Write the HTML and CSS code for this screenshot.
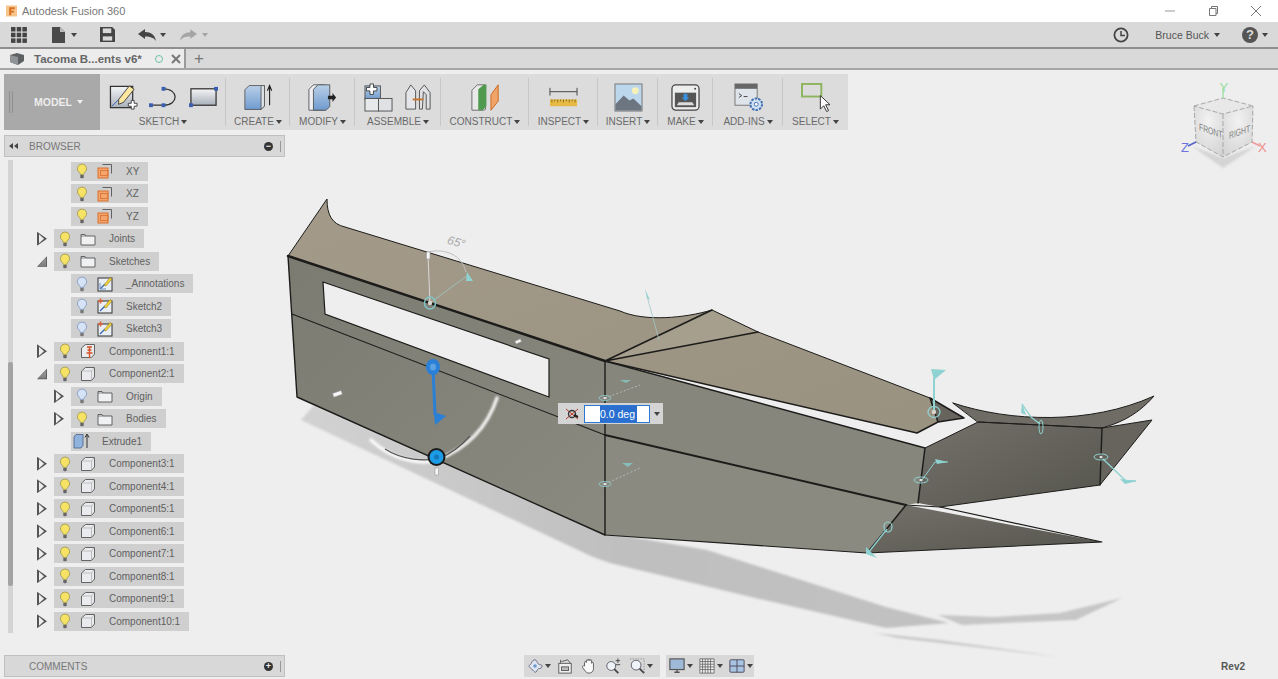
FILE: index.html
```html
<!DOCTYPE html>
<html lang="en">
<head>
<meta charset="utf-8">
<title>Autodesk Fusion 360</title>
<link rel="stylesheet" href="styles.css">
</head>
<body>
<svg class="defs" width="0" height="0" aria-hidden="true">
  <defs>
    <linearGradient id="blueFace" x1="0" y1="0" x2="0" y2="1"><stop offset="0" stop-color="#b9cfe8"/><stop offset="1" stop-color="#6f9bcf"/></linearGradient>
    <linearGradient id="greyFace" x1="0" y1="0" x2="0" y2="1"><stop offset="0" stop-color="#f4f5f7"/><stop offset="1" stop-color="#a9b0ba"/></linearGradient>
    <linearGradient id="topFace" x1="0" y1="0" x2="1" y2="1"><stop offset="0" stop-color="#a39a89"/><stop offset="1" stop-color="#9a9281"/></linearGradient>
    <linearGradient id="frontFace" x1="0" y1="0" x2="1" y2="1"><stop offset="0" stop-color="#7b7b72"/><stop offset="1" stop-color="#8b8a80"/></linearGradient>
    <linearGradient id="darkFace" x1="0" y1="0" x2="1" y2="1"><stop offset="0" stop-color="#73716a"/><stop offset="1" stop-color="#55544d"/></linearGradient>
    <linearGradient id="shadowFade" x1="0" y1="0" x2="1" y2="0"><stop offset="0" stop-color="#d2d2d2"/><stop offset=".5" stop-color="#bfbfbf"/><stop offset="1" stop-color="#c2c2c2"/></linearGradient>
    <radialGradient id="cubeFace" cx=".5" cy=".3" r=".9"><stop offset="0" stop-color="#f2f2f2"/><stop offset="1" stop-color="#cfcfcf"/></radialGradient>

    <symbol id="bulb-on" viewBox="0 0 12 16"><path d="M6 1a4.600 4.600 0 0 0-2.600 8.400c.6.500.8 1.200.8 2h3.600c0-.8.2-1.500.8-2A4.600 4.600 0 0 0 6 1z" fill="#f6e264" stroke="#9d9550" stroke-width=".8"/><path d="M4.300 12h3.400v2.200l-1 1h-1.400l-1-1z" fill="#666"/></symbol>
    <symbol id="bulb-off" viewBox="0 0 12 16"><path d="M6 1a4.600 4.600 0 0 0-2.600 8.400c.6.500.8 1.200.8 2h3.600c0-.8.2-1.500.8-2A4.600 4.600 0 0 0 6 1z" fill="#d6e3f6" stroke="#7b93bd" stroke-width=".8"/><path d="M4.300 12h3.400v2.200l-1 1h-1.400l-1-1z" fill="#777"/></symbol>
    <symbol id="folder" viewBox="0 0 16 14"><path d="M1 2.500h4l1 1.500h9v9H1z" fill="#f0f1f3" stroke="#555" stroke-width=".9"/><path d="M1 4h5" stroke="#555" stroke-width=".7" fill="none"/></symbol>
    <symbol id="plane" viewBox="0 0 16 16"><path d="M5.500 1.500h9v9" fill="none" stroke="#555" stroke-width=".9"/><rect x="1" y="5" width="10" height="10" fill="#f4a56e" stroke="#d9702f"/><rect x="3.500" y="7.500" width="7.500" height="5" fill="none" stroke="#d9702f" stroke-width=".8"/></symbol>
    <symbol id="comp" viewBox="0 0 16 16"><path d="M1.500 5 5.500 1.500h9v9.500l-3 3.500h-10z" fill="#e9ebee" stroke="#555" stroke-width=".9" stroke-linejoin="round"/><path d="M1.500 5h10v9.500M11.500 5l3-3.500" fill="none" stroke="#aaa" stroke-width=".7"/></symbol>
    <symbol id="comp-pin" viewBox="0 0 16 16"><path d="M1.500 5 5.500 1.500h9v9.500l-3 3.500h-10z" fill="#e9ebee" stroke="#555" stroke-width=".9" stroke-linejoin="round"/><path d="M7 4h5M7.500 7h4M6.500 10h6M9.500 4v11" stroke="#d8532a" stroke-width="1.400" fill="none"/></symbol>
    <symbol id="sketch" viewBox="0 0 16 16"><rect x="1" y="2" width="14" height="13" fill="#e9edf4" stroke="#333"/><path d="M3 13 8 8" stroke="#3566b0" stroke-width="1.300"/><path d="M3 13h6M3 13V7" stroke="#6b8fc5" stroke-width="1"/><path d="M7 9l6-7.500 2 1.500-6 7z" fill="#f4d43c" stroke="#7d6a10" stroke-width=".5"/></symbol>
    <symbol id="sketch-warn" viewBox="0 0 16 16"><rect x="1" y="3" width="14" height="12" fill="#e9edf4" stroke="#333"/><path d="M3 13 8 8" stroke="#3566b0" stroke-width="1.300"/><path d="M7 9l6-7.500 2 1.500-6 7z" fill="#f4d43c" stroke="#7d6a10" stroke-width=".5"/><path d="M1 3h5M3.500 .5v5" stroke="#d8633a" stroke-width="1.600"/></symbol>
    <symbol id="extrude" viewBox="0 0 18 16"><path d="M1 4 3 1.500h7v11L8 15H1z" fill="#8fb3dd" stroke="#44618a" stroke-width=".8"/><path d="M14 15V2M12 4.500 14 1l2 3.500" fill="none" stroke="#333" stroke-width="1"/></symbol>
  </defs>
</svg>

<div class="app">
  <header class="titlebar">
    <svg class="ticon" viewBox="0 0 12 12"><rect width="12" height="12" fill="#f6c58d"/><path d="M3.500 2h6v2H5.700v1.700h3v2h-3V10.500H3.500z" fill="#d9701f"/></svg>
    <span class="title">Autodesk Fusion 360</span>
    <div class="winctl">
      <svg class="wc" viewBox="0 0 12 12"><path d="M1 6h10" stroke="#999"/></svg>
      <svg class="wc" viewBox="0 0 12 12"><path d="M2.500 3.500h6.500v7H2.500zM4.500 3.500v-2h6v7H9" fill="none" stroke="#777"/></svg>
      <svg class="wc" viewBox="0 0 12 12"><path d="M1 1l10 10M11 1 1 11" stroke="#777"/></svg>
    </div>
  </header>

  <div class="qat">
    <svg class="q-grid" viewBox="0 0 16 16" fill="#444"><rect width="4.500" height="4.500"/><rect x="5.700" width="4.500" height="4.500"/><rect x="11.400" width="4.500" height="4.500"/><rect y="5.700" width="4.500" height="4.500"/><rect x="5.700" y="5.700" width="4.500" height="4.500"/><rect x="11.400" y="5.700" width="4.500" height="4.500"/><rect y="11.400" width="4.500" height="4.500"/><rect x="5.700" y="11.400" width="4.500" height="4.500"/><rect x="11.400" y="11.400" width="4.500" height="4.500"/></svg>
    <svg class="q-file" viewBox="0 0 14 16"><path d="M0 0h8l5 5v11H0z" fill="#4a4a4a"/><path d="M8 0v5h5" fill="#bbb"/></svg>
    <span class="caret q-c1"></span>
    <svg class="q-save" viewBox="0 0 16 16"><path d="M0 0h13l3 3v13H0z" fill="#444"/><rect x="3" y="1.500" width="9" height="5" fill="#d9d9d9"/><rect x="3" y="10" width="10" height="4.500" fill="#d9d9d9"/></svg>
    <svg class="q-undo" viewBox="0 0 18 12"><path d="M0 5 7 0v3c6 0 10 3 11 9-2-3-5-4.500-11-4.500V10z" fill="#444"/></svg>
    <span class="caret q-c2"></span>
    <svg class="q-redo" viewBox="0 0 18 12"><path d="M18 5 11 0v3C5 3 1 6 0 12c2-3 5-4.500 11-4.500V10z" fill="#a5a5a5"/></svg>
    <span class="caret faint q-c3"></span>
    <svg class="q-clock" viewBox="0 0 16 16"><circle cx="8" cy="8" r="6.600" fill="none" stroke="#444" stroke-width="1.800"/><path d="M8 4v4.500h4" fill="none" stroke="#444" stroke-width="1.500"/></svg>
    <span class="user">Bruce Buck</span>
    <span class="caret q-c4"></span>
    <span class="help">?</span>
    <span class="caret q-c5"></span>
  </div>

  <div class="tabs">
    <div class="tab">
      <svg class="tab-box" viewBox="0 0 16 14"><path d="M1 3 8 1l7 2v6l-6 4-8-3z" fill="#5e6164"/><path d="M1 3l8 2v8l-8-3z" fill="#8f9296"/></svg>
      <span class="tab-name">Tacoma B...ents v6*</span>
      <svg class="tab-dot" viewBox="0 0 10 10"><circle cx="5" cy="5" r="3.500" fill="none" stroke="#6fc1a8"/></svg>
      <svg class="tab-x" viewBox="0 0 10 10"><path d="M1 1l8 8M9 1 1 9" stroke="#777" stroke-width="2"/></svg>
    </div>
    <span class="tab-plus">+</span>
  </div>

  <main class="workspace">
    <svg class="canvas" viewBox="0 70 1278 609" aria-label="3D model">
      <!-- shadows -->
      <g class="soft">
        <path d="M301 420 593 557 610 563 751 597 886 628 949 623 886 607 707 550 637 538 604 533 314 405z" fill="url(#shadowFade)"/>
        <path d="M875 633 897 638 1060 657 940 640z" fill="#c9c9c9"/>
        <path d="M938 615 962 625 1076 620 1122 598 1060 613 995 617z" fill="#c6c6c6"/>
      </g>
      <!-- top faces -->
      <path d="M288 256 327 199C327 215 332 224 345 227L620 311C645 322 685 318 712 310L758 332 930 398 938 422 917 433 605 361z" fill="url(#topFace)"/>
      <path d="M605 361 712 310 758 332z" fill="#a79f8e"/>
      <path d="M930 398 964 418 938 422z" fill="#66645c"/>
      <!-- left body -->
      <path d="M288 256 605 361V535L297 397z" fill="url(#frontFace)"/>
      <path d="M323 282 549 359V397L325 314z" fill="#eeeeee" stroke="#1d1d1b" stroke-width="1.200"/>
      <!-- right body -->
      <path d="M953 403C1010 422 1090 425 1154 396 1135 418 1115 424 1102 428L978 422z" fill="#6e6c64"/>
      <path d="M1102 428 1152 420 1100 485z" fill="#66645d"/>
      <path d="M925 448 978 422 1102 428 1100 485 940 507 918 503z" fill="url(#darkFace)"/>
      <path d="M605 361 925 448 918 503 906 505 605 435z" fill="#87867c"/>
      <path d="M605 435 906 505 867 553 605 535z" fill="#8b8a80"/>
      <path d="M906 505 1102 542 867 553z" fill="url(#darkFace)"/>
      <!-- edges -->
      <g fill="none" stroke="#1c1c1a" stroke-linecap="round" stroke-linejoin="round">
        <path d="M288 256 605 361" stroke-width="2.400"/>
        <path d="M288 256 327 199C327 215 332 224 345 227L620 311C645 322 685 318 712 310L758 332 930 398" stroke-width="1"/>
        <path d="M288 256 297 397 605 535V361" stroke-width="1.400"/>
        <path d="M605 361 712 310M605 361 758 332" stroke-width="1.600"/>
        <path d="M605 361 917 433 938 422 964 418 930 398 938 422" stroke-width="1.500"/>
        <path d="M605 361 925 448 918 503" stroke-width="1.500"/>
        <path d="M292 314 605 435" stroke-width="1.100"/>
        <path d="M605 435 906 505" stroke-width="1.800"/>
        <path d="M906 505 940 507 1102 542 867 553 605 535" stroke-width="1.100"/>
        <path d="M906 505 867 553" stroke-width="1.500"/>
        <path d="M925 448 978 422 1102 428 1152 420 1100 485 940 507" stroke-width="1"/>
        <path d="M953 403C1010 422 1090 425 1154 396 1135 418 1115 424 1102 428L978 422z" stroke-width="1"/>
        <path d="M1102 428 1100 485" stroke-width="1.400"/>
      </g>
      <!-- teal manipulators -->
      <g fill="#8fd2d2" stroke="#8fd2d2">
        <path d="M430 303 428 255" fill="none" stroke="#d8d8d8"/>
        <path d="M430 303 468 275" fill="none" stroke="#9fc9c3" stroke-width=".8"/>
        <path d="M428 252C445 248 462 255 466 272" fill="none" stroke="#bfbfbf"/>
        <path d="M467 272 473 281 466 281z" stroke="none"/>
        <ellipse cx="430" cy="303" rx="5.500" ry="6" fill="none" stroke="#7fc5c5" stroke-width="1.500"/>
        <circle cx="430" cy="303" r="2.200" fill="#dcd6d0" stroke="none"/>
        <path d="M645 289 650 300 647 298z" stroke="none"/>
        <path d="M647 296 659 340" fill="none" stroke="#9fc9c3" stroke-width=".8"/>
        <ellipse cx="605" cy="398" rx="6" ry="2.500" fill="none" stroke-width=".8"/>
        <ellipse cx="605" cy="484" rx="6" ry="2.500" fill="none" stroke-width=".8"/>
        <circle cx="605" cy="398" r="1.500" fill="#e2e8e4" stroke="none"/>
        <circle cx="605" cy="484" r="1.500" fill="#e2e8e4" stroke="none"/>
        <path d="M605 398 640 385M605 484 640 468" fill="none" stroke="#b8c9c4" stroke-dasharray="2 2" stroke-width=".8"/>
        <path d="M620 380h11l-5 3zM622 463h11l-5 4z" stroke="none" fill="#88bcb9"/>
        <path d="M934 410V378" fill="none" stroke-width="2"/>
        <path d="M931 369 946 370 934 380z" stroke="none"/>
        <ellipse cx="934" cy="412" rx="6" ry="5.500" fill="none" stroke-width="1.300"/>
        <circle cx="934" cy="412" r="2.200" fill="#d9d6d0" stroke="none"/>
        <path d="M1022 404 1031 417 1040 424" fill="none" stroke-width="1.300"/>
        <path d="M1022 403 1026 415 1021 413z" stroke="none"/>
        <ellipse cx="1041" cy="427" rx="2" ry="7" fill="none" stroke-width="1"/>
        <ellipse cx="921" cy="480" rx="7" ry="3" fill="none" stroke-width="1"/>
        <circle cx="921" cy="480" r="1.500" fill="#dfe5e0" stroke="none"/>
        <path d="M922 480 935 462 948 462" fill="none" stroke-width="1"/>
        <path d="M935 459 948 462 937 464z" stroke="none"/>
        <ellipse cx="1101" cy="457" rx="7" ry="3" fill="none" stroke-width="1"/>
        <circle cx="1101" cy="457" r="1.500" fill="#dfe5e0" stroke="none"/>
        <path d="M1103 459 1126 481 1136 481" fill="none" stroke-width="1.300"/>
        <path d="M1120 479 1137 481 1125 484z" stroke="none"/>
        <ellipse cx="888" cy="527" rx="4" ry="5" fill="none" stroke-width="1.200"/>
        <path d="M887 529 868 553" fill="none" stroke-width="1.300"/>
        <path d="M866 547 877 558 866 554z" stroke="none"/>
      </g>
      <!-- white handles -->
      <g fill="#f7f7f7" stroke="#999" stroke-width=".6">
        <rect x="426.500" y="252" width="3.500" height="7"/>
        <rect x="515" y="340" width="6" height="3" transform="rotate(-25 518 341)"/>
        <rect x="333" y="392" width="9" height="4" transform="rotate(-20 337 394)"/>
        <rect x="435" y="468" width="3.500" height="7"/>
      </g>
      <!-- blue manipulators -->
      <path class="glow" d="M371 440C392 460 420 465 437 460 468 448 487 428 497 398" fill="none" stroke="#fff" stroke-width="3.500" stroke-linecap="round"/>
      <path d="M385 449C402 460 425 462 440 458 450 454 460 447 470 436" fill="none" stroke="#555" stroke-width="1.200"/>
      <path d="M433 368 435 415" stroke="#2a7fd6" stroke-width="3" fill="none"/>
      <path d="M434 412 446 416 435 425z" fill="#2a7fd6"/>
      <ellipse cx="433" cy="367" rx="7" ry="8" fill="#2a7fd6"/>
      <ellipse cx="433" cy="367" rx="3" ry="3.500" fill="#5da3e3"/>
      <circle cx="436.500" cy="457" r="9" fill="#1a1a1a"/>
      <circle cx="436.500" cy="457" r="7" fill="#1b9be6"/>
      <circle cx="436.500" cy="457" r="2.500" fill="#1577b8"/>
      <text class="angle" x="447" y="246" transform="rotate(16 456 243)">65°</text>
      <!-- view cube -->
      <path class="soft" d="M1223 158 1192 146 1223 168 1256 146z" fill="#d4d4d4"/>
      <path d="M1194 106 1223 98 1253 106 1223 114z" fill="#e8e8e8"/>
      <path d="M1194 106 1223 114V157L1196 142z" fill="url(#cubeFace)"/>
      <path d="M1253 106 1223 114V157L1252 142z" fill="url(#cubeFace)"/>
      <path d="M1194 106 1223 98 1253 106 1223 114zM1194 106 1196 142 1223 157 1252 142 1253 106M1223 114V157" fill="none" stroke="#a8a8a8" stroke-width="1" stroke-dasharray="5 2"/>
      <path d="M1223 98V88" stroke="#a6e0ac" stroke-width="1.500"/>
      <path d="M1196 142 1188 146" stroke="#5560c8" stroke-width="1.500"/>
      <path d="M1252 142 1260 146" stroke="#ee9a9a" stroke-width="1.500"/>
      <text class="axis axis-y" x="1219.500" y="92">Y</text>
      <text class="axis axis-z" x="1181" y="152">Z</text>
      <text class="axis axis-x" x="1258" y="152">X</text>
      <text class="cube-label" transform="matrix(.85 .3 0 1.200 1199 130)">FRONT</text>
      <text class="cube-label" transform="matrix(.85 -.3 0 1.200 1229 139)">RIGHT</text>
    </svg>

    <div class="toolbar">
      <div class="model-tab"><span class="grip"></span><span>MODEL</span><span class="caret light"></span></div>

      <section class="tgroup g-sketch">
        <div class="ticons">
          <svg class="ti" viewBox="0 0 30 30"><rect x="1.500" y="3.500" width="23" height="22" fill="url(#greyFace)" stroke="#333" stroke-width="1.300"/><path d="M3 24 12 15" stroke="#3566b0"/><path d="M10 17l11-14 5 3.500L15 20l-5 2z" fill="#fbe7a0" stroke="#444"/><path d="M20 21h3v-3h3v3h3v3h-3v3h-3v-3h-3z" fill="#fff" stroke="#444"/></svg>
          <svg class="ti" viewBox="0 0 30 30"><path d="M2 23H15C31 23 31 6 15 6" fill="none" stroke="#333" stroke-width="1.300"/><g fill="#3a5fb0"><rect x="0" y="21" width="4" height="4"/><rect x="13" y="21" width="4" height="4"/><rect x="13" y="4" width="4" height="4"/></g></svg>
          <svg class="ti" viewBox="0 0 30 30"><rect x="2" y="6" width="26" height="17" fill="url(#greyFace)" stroke="#333" stroke-width="1.300"/><g fill="#3a5fb0"><rect x="0" y="21" width="4" height="4"/><rect x="26" y="4" width="4" height="4"/></g></svg>
        </div>
        <span class="tlabel">SKETCH</span>
      </section>
      <section class="tgroup g-create">
        <div class="ticons">
          <svg class="ti" viewBox="0 0 34 30"><path d="M1 6 6 1h18v24l-4 4H1z" fill="url(#blueFace)" stroke="#555"/><path d="M20 1h4v24l-4 4z" fill="#dfe3e8" stroke="#555"/><path d="M30 24V3M27.500 7 30 1l2.500 6" fill="none" stroke="#222" stroke-width="1.300"/></svg>
        </div>
        <span class="tlabel">CREATE</span>
      </section>
      <section class="tgroup g-modify">
        <div class="ticons">
          <svg class="ti" viewBox="0 0 32 30"><path d="M1 6 6 1h12v28H1z" fill="#eef0f3" stroke="#555"/><path d="M6 6 11 1h13v24l-4 4H6z" fill="url(#blueFace)" stroke="#555"/><path d="M22 13h5v-3l4 5-4 5v-3h-5z" fill="#222"/></svg>
        </div>
        <span class="tlabel">MODIFY</span>
      </section>
      <section class="tgroup g-assemble">
        <div class="ticons">
          <svg class="ti" viewBox="0 0 30 30"><rect x="1" y="3" width="16" height="14" fill="url(#blueFace)" stroke="#555"/><rect x="1" y="16" width="14" height="13" fill="#e6e8ea" stroke="#555"/><rect x="15" y="16" width="14" height="13" fill="#dfe1e4" stroke="#555"/><path d="M4 4h4V0h4v4h4v4h-4v4H8V8H4z" transform="translate(-1 1) scale(.9)" fill="#fff" stroke="#333"/></svg>
          <svg class="ti" viewBox="0 0 30 30"><path d="M2 27V10l5-8 5 6v19z" fill="#e3e5e8" stroke="#555"/><path d="M16 27V8l5-6 6 8v17h-4V12l-3-3-1 18z" fill="#dfe1e4" stroke="#555"/><path d="M9 17h11" stroke="#c9742e" stroke-width="2"/></svg>
        </div>
        <span class="tlabel">ASSEMBLE</span>
      </section>
      <section class="tgroup g-construct">
        <div class="ticons">
          <svg class="ti" viewBox="0 0 32 30"><path d="M1 7 7 1h9v27l-2 1H1z" fill="#e9e9e9" stroke="#666"/><path d="M8 6 14 1h3v23l-4 5H8z" fill="#4f9a4f"/><path d="M22 12 30 1v18l-8 10z" fill="#f0a468" stroke="#c9661f"/></svg>
        </div>
        <span class="tlabel">CONSTRUCT</span>
      </section>
      <section class="tgroup g-inspect">
        <div class="ticons">
          <svg class="ti" viewBox="0 0 30 30"><path d="M1 9h28M1 5v8M29 5v8" stroke="#444" fill="none"/><rect x="1" y="17" width="28" height="7" fill="#e7ba45"/><path d="M3 17v3M6 17v2M9 17v3M12 17v2M15 17v3M18 17v2M21 17v3M24 17v2M27 17v3" stroke="#8a6c1a"/></svg>
        </div>
        <span class="tlabel">INSPECT</span>
      </section>
      <section class="tgroup g-insert">
        <div class="ticons">
          <svg class="ti" viewBox="0 0 30 30"><rect x="1" y="1" width="28" height="28" fill="#bcd6ec" stroke="#777"/><circle cx="22" cy="8" r="3.500" fill="#f7f0b8"/><path d="M1.500 28.500V22L10 13l6 5 4-2 8.500 8v4.500z" fill="#6d7680"/></svg>
        </div>
        <span class="tlabel">INSERT</span>
      </section>
      <section class="tgroup g-make">
        <div class="ticons">
          <svg class="ti" viewBox="0 0 30 30"><rect x="1" y="2" width="28" height="26" rx="4" fill="#eceded" stroke="#444" stroke-width="1.300"/><rect x="4" y="10" width="22" height="15" fill="#555"/><path d="M13 11h4v4h2l-4 4-4-4h2z" fill="#3b8fdc"/><path d="M8 20h14l2 3H6z" fill="#ddd"/><circle cx="25" cy="6" r="1" fill="#444"/></svg>
        </div>
        <span class="tlabel">MAKE</span>
      </section>
      <section class="tgroup g-addins">
        <div class="ticons">
          <svg class="ti" viewBox="0 0 30 30"><rect x="1" y="1" width="23" height="22" fill="#dfe3ea" stroke="#777"/><rect x="1" y="1" width="23" height="5" fill="#666"/><path d="M5 11l3 2-3 2M10 14h4" stroke="#444" fill="none"/><circle cx="23" cy="22" r="6" fill="#cfe0f2" stroke="#3f6eb0" stroke-width="2" stroke-dasharray="2.500 1.200"/><circle cx="23" cy="22" r="2" fill="#fff" stroke="#3f6eb0"/></svg>
        </div>
        <span class="tlabel">ADD-INS</span>
      </section>
      <section class="tgroup g-select">
        <div class="ticons">
          <svg class="ti" viewBox="0 0 30 30"><rect x="1" y="1" width="20" height="13" fill="none" stroke="#8fb45f" stroke-width="2"/><path d="M20 13v14l3.500-3.500 3 6 2-1-3-6H30z" fill="#fff" stroke="#333"/></svg>
        </div>
        <span class="tlabel">SELECT</span>
      </section>
    </div>

    <aside class="browser">
      <div class="panel-head">
        <svg class="back" viewBox="0 0 9 6"><path d="M4 0v6L0 3zM9 0v6L5 3z" fill="#444"/></svg>
        <span class="panel-title">BROWSER</span>
        <span class="panel-btn">−</span>
        <span class="panel-grip"></span>
      </div>
      <div class="tree-wrap">
        <div class="scroll"><div class="thumb"></div></div>
        <div class="tree">
          <div class="row noarrow"><span class="chip"><svg class="bulb"><use href="#bulb-on"/></svg><svg class="nicon"><use href="#plane"/></svg><span class="nlabel">XY</span></span></div>
          <div class="row noarrow"><span class="chip"><svg class="bulb"><use href="#bulb-on"/></svg><svg class="nicon"><use href="#plane"/></svg><span class="nlabel">XZ</span></span></div>
          <div class="row noarrow"><span class="chip"><svg class="bulb"><use href="#bulb-on"/></svg><svg class="nicon"><use href="#plane"/></svg><span class="nlabel">YZ</span></span></div>
          <div class="row l0"><span class="arrow"></span><span class="chip"><svg class="bulb"><use href="#bulb-on"/></svg><svg class="nicon"><use href="#folder"/></svg><span class="nlabel">Joints</span></span></div>
          <div class="row l0"><span class="arrow open"></span><span class="chip"><svg class="bulb"><use href="#bulb-on"/></svg><svg class="nicon"><use href="#folder"/></svg><span class="nlabel">Sketches</span></span></div>
          <div class="row noarrow"><span class="chip"><svg class="bulb"><use href="#bulb-off"/></svg><svg class="nicon"><use href="#sketch"/></svg><span class="nlabel">_Annotations</span></span></div>
          <div class="row noarrow"><span class="chip"><svg class="bulb"><use href="#bulb-off"/></svg><svg class="nicon"><use href="#sketch-warn"/></svg><span class="nlabel">Sketch2</span></span></div>
          <div class="row noarrow"><span class="chip"><svg class="bulb"><use href="#bulb-off"/></svg><svg class="nicon"><use href="#sketch-warn"/></svg><span class="nlabel">Sketch3</span></span></div>
          <div class="row l0"><span class="arrow"></span><span class="chip"><svg class="bulb"><use href="#bulb-on"/></svg><svg class="nicon"><use href="#comp-pin"/></svg><span class="nlabel">Component1:1</span></span></div>
          <div class="row l0"><span class="arrow open"></span><span class="chip"><svg class="bulb"><use href="#bulb-on"/></svg><svg class="nicon"><use href="#comp"/></svg><span class="nlabel">Component2:1</span></span></div>
          <div class="row l1"><span class="arrow"></span><span class="chip"><svg class="bulb"><use href="#bulb-off"/></svg><svg class="nicon"><use href="#folder"/></svg><span class="nlabel">Origin</span></span></div>
          <div class="row l1"><span class="arrow"></span><span class="chip"><svg class="bulb"><use href="#bulb-on"/></svg><svg class="nicon"><use href="#folder"/></svg><span class="nlabel">Bodies</span></span></div>
          <div class="row noarrow"><span class="chip feature"><svg class="ficon"><use href="#extrude"/></svg><span class="nlabel">Extrude1</span></span></div>
          <div class="row l0"><span class="arrow"></span><span class="chip"><svg class="bulb"><use href="#bulb-on"/></svg><svg class="nicon"><use href="#comp"/></svg><span class="nlabel">Component3:1</span></span></div>
          <div class="row l0"><span class="arrow"></span><span class="chip"><svg class="bulb"><use href="#bulb-on"/></svg><svg class="nicon"><use href="#comp"/></svg><span class="nlabel">Component4:1</span></span></div>
          <div class="row l0"><span class="arrow"></span><span class="chip"><svg class="bulb"><use href="#bulb-on"/></svg><svg class="nicon"><use href="#comp"/></svg><span class="nlabel">Component5:1</span></span></div>
          <div class="row l0"><span class="arrow"></span><span class="chip"><svg class="bulb"><use href="#bulb-on"/></svg><svg class="nicon"><use href="#comp"/></svg><span class="nlabel">Component6:1</span></span></div>
          <div class="row l0"><span class="arrow"></span><span class="chip"><svg class="bulb"><use href="#bulb-on"/></svg><svg class="nicon"><use href="#comp"/></svg><span class="nlabel">Component7:1</span></span></div>
          <div class="row l0"><span class="arrow"></span><span class="chip"><svg class="bulb"><use href="#bulb-on"/></svg><svg class="nicon"><use href="#comp"/></svg><span class="nlabel">Component8:1</span></span></div>
          <div class="row l0"><span class="arrow"></span><span class="chip"><svg class="bulb"><use href="#bulb-on"/></svg><svg class="nicon"><use href="#comp"/></svg><span class="nlabel">Component9:1</span></span></div>
          <div class="row l0"><span class="arrow"></span><span class="chip"><svg class="bulb"><use href="#bulb-on"/></svg><svg class="nicon"><use href="#comp"/></svg><span class="nlabel">Component10:1</span></span></div>
        </div>
      </div>
    </aside>

    <div class="angle-box">
      <svg class="angle-icon" viewBox="0 0 14 12"><path d="M1 1l12 10M13 1 1 11" stroke="#c0392b"/><circle cx="7" cy="6" r="3.500" fill="none" stroke="#333" stroke-width="1.300"/><path d="M9 7l4 2" stroke="#222" stroke-width="2"/></svg>
      <div class="angle-input"><span class="sel">0.0 deg</span></div>
      <span class="caret angle-caret"></span>
    </div>

    <footer class="bottom">
      <div class="comments">
        <span class="panel-title">COMMENTS</span>
        <span class="panel-btn">+</span>
        <span class="panel-grip"></span>
      </div>
      <div class="nav nav-a">
        <svg class="nv" viewBox="0 0 18 18"><path d="M9 2C5 2 6 6 3 8c-2 2 1 3 2 4 2 2 3 4 5 4 1 0 1-3 3-4 2 0 4-1 4-3s-3-1-4-2C11 5 11 2 9 2z" fill="#dde6f2" stroke="#667"/><circle cx="9" cy="9" r="2" fill="#6f9bcf"/></svg>
        <span class="caret nc"></span>
        <svg class="nv" viewBox="0 0 18 18"><rect x="2" y="6" width="14" height="11" fill="#eee" stroke="#555"/><rect x="5" y="10" width="8" height="4" fill="#bbb" stroke="#555"/><path d="M4 6V2M5 4l7-2 3 4" fill="none" stroke="#555"/></svg>
        <svg class="nv" viewBox="0 0 18 18"><path d="M4 9V5a1 1 0 0 1 2 0V3a1 1 0 0 1 2 0v-.5a1 1 0 0 1 2 0V3a1 1 0 0 1 2 0v3a1 1 0 0 1 2 0v6c0 3-2 5-5 5-2 0-3-1-4-2L2 11c-1-1 0-3 2-2z" fill="#fafafa" stroke="#444" stroke-width=".9"/></svg>
        <svg class="nv" viewBox="0 0 18 18"><circle cx="7" cy="9" r="5" fill="#eef3f7" stroke="#556"/><path d="M10.500 12.500 15 17" stroke="#444" stroke-width="2"/><path d="M12 3h5M14.500 .5v5M12 7.500h5" stroke="#444"/></svg>
        <svg class="nv" viewBox="0 0 18 18"><circle cx="8" cy="8" r="5.500" fill="#eef3f7" stroke="#556"/><path d="M12 12l5 5" stroke="#444" stroke-width="2"/><path d="M1 1h16v16" fill="none" stroke="#888" stroke-dasharray="1.500 1.500"/></svg>
        <span class="caret nc"></span>
      </div>
      <div class="nav nav-b">
        <svg class="nv" viewBox="0 0 18 18"><rect x="1" y="1" width="16" height="12" fill="#9fb9d8" stroke="#555" stroke-width="1.300"/><path d="M6 16h6M9 13v3" stroke="#555" stroke-width="1.500"/></svg>
        <span class="caret nc"></span>
        <svg class="nv" viewBox="0 0 18 18"><path d="M1 1h16v16H1zM4 1v16M7 1v16M10 1v16M13 1v16M1 4h16M1 7h16M1 10h16M1 13h16" fill="#eee" stroke="#555" stroke-width=".8"/></svg>
        <span class="caret nc"></span>
        <svg class="nv" viewBox="0 0 18 18"><rect x="1" y="2" width="16" height="14" rx="1" fill="#a9c3e2" stroke="#445"/><path d="M9 2v14M1 9h16" stroke="#445"/></svg>
        <span class="caret nc"></span>
      </div>
      <span class="rev">Rev2</span>
    </footer>
  </main>
</div>
</body>
</html>
```

FILE: styles.css
```css
* { box-sizing: border-box; }
html, body { margin: 0; padding: 0; height: 100%; overflow: hidden; }
body { font-family: "Liberation Sans", Arial, sans-serif; color: #666; background: #eee; }
.defs { position: absolute; }
.app { width: 1278px; height: 679px; display: flex; flex-direction: column; overflow: hidden; }

.caret { display: inline-block; width: 0; height: 0; border-left: 3.500px solid transparent; border-right: 3.500px solid transparent; border-top: 4px solid #444; flex: none; }
.caret.faint { border-top-color: #a5a5a5; }
.caret.light { border-top-color: #eee; margin-left: 5px; }

/* title bar */
.titlebar { height: 22px; background: #fff; display: flex; align-items: center; padding-left: 6px; flex: none; }
.ticon { width: 11px; height: 12px; margin-right: 5px; }
.title { font-size: 11px; color: #777; }
.winctl { margin-left: auto; display: flex; align-items: center; padding-right: 16px; gap: 31px; }
.wc { width: 12px; height: 12px; }

/* quick access */
.qat { height: 27px; background: #d9d9d9; border-bottom: 2px solid #8f8f8f; display: flex; align-items: center; flex: none; padding-left: 11px; font-size: 10.500px; }
.q-grid { width: 16px; height: 16px; }
.q-file { width: 14px; height: 16px; margin-left: 25px; }
.q-c1 { margin-left: 5px; }
.q-save { width: 15px; height: 15px; margin-left: 23px; }
.q-undo { width: 18px; height: 12px; margin-left: 23px; }
.q-c2 { margin-left: 4px; }
.q-redo { width: 17px; height: 12px; margin-left: 14px; }
.q-c3 { margin-left: 5px; }
.q-clock { width: 16px; height: 16px; margin-left: auto; }
.user { margin-left: 26px; color: #555; }
.q-c4 { margin-left: 5px; }
.help { width: 16px; height: 16px; border-radius: 50%; background: #555; color: #ddd; font-weight: bold; font-size: 13px; line-height: 16px; text-align: center; margin-left: 22px; }
.q-c5 { margin-left: 4px; margin-right: 10px; }

/* tabs */
.tabs { height: 21px; background: #d9d9d9; border-bottom: 2px solid #a5a5a5; display: flex; align-items: center; flex: none; }
.tab { width: 186px; height: 19px; background: #ececec; border-right: 2px solid #9a9a9a; display: flex; align-items: center; padding-left: 9px; }
.tab-box { width: 16px; height: 14px; }
.tab-name { margin-left: 9px; font-size: 11.500px; font-weight: bold; color: #666; white-space: nowrap; }
.tab-dot { width: 10px; height: 10px; margin-left: 12px; }
.tab-x { width: 10px; height: 10px; margin-left: 7px; }
.tab-plus { margin-left: 8px; font-size: 17px; line-height: 19px; color: #777; }

/* workspace */
.workspace { position: relative; flex: 1; min-height: 0; background: #eeeeee; display: flex; flex-direction: column; padding: 4px 0 2px 4px; }
.canvas { position: absolute; left: 0; top: 0; width: 1278px; height: 609px; }
.soft { filter: blur(1.200px); }
.glow { filter: blur(1px); opacity: .9; }
.angle { font-size: 12px; fill: #aaa; font-family: "Liberation Sans", Arial, sans-serif; font-style: italic; }
.axis { font-size: 13px; font-family: "Liberation Sans", Arial, sans-serif; }
.axis-y { fill: #9bdca3; }
.axis-z { fill: #6a74dc; }
.axis-x { fill: #ef8f8f; }
.cube-label { font-size: 8px; fill: #808080; font-family: "Liberation Sans", Arial, sans-serif; }

/* toolbar */
.toolbar { position: relative; display: flex; height: 56px; width: 844px; background: #dcdcdc; flex: none; }
.model-tab { width: 96px; background: #a9a9a9; color: #eee; font-size: 10.500px; font-weight: bold; display: flex; align-items: center; padding-left: 30px; position: relative; }
.grip { position: absolute; left: 5px; top: 17px; height: 22px; width: 4px; border-left: 1px solid #8f8f8f; border-right: 1px solid #8f8f8f; }
.tgroup { display: flex; flex-direction: column; align-items: center; position: relative; padding-top: 7px; }
.tgroup::after { content: ""; position: absolute; right: 0; top: 4px; bottom: 4px; border-right: 1px solid #c8c8c8; }
.g-select::after { display: none; }
.ticons { display: flex; height: 32px; align-items: center; gap: 11px; }
.ti { width: 29px; height: 29px; display: block; }
.tlabel { font-size: 10px; color: #6a6a6a; margin-top: 3px; display: flex; align-items: center; white-space: nowrap; }
.tlabel::after { content: ""; margin-left: 2px; border-left: 3px solid transparent; border-right: 3px solid transparent; border-top: 4px solid #444; }
.g-sketch { width: 126px; }
.g-create { width: 64px; }
.g-modify { width: 65px; }
.g-assemble { width: 86px; }
.g-construct { width: 88px; }
.g-inspect { width: 69px; }
.g-insert { width: 60px; }
.g-make { width: 55px; }
.g-addins { width: 70px; }
.g-select { width: 65px; }

/* browser */
.browser { position: relative; width: 281px; margin-top: 5px; flex: 1; min-height: 0; display: flex; flex-direction: column; }
.panel-head, .comments { height: 22px; background: #d8d8d8; border: 1px solid #c0c0c0; display: flex; align-items: center; flex: none; font-size: 10px; color: #777; }
.back { width: 9px; height: 6px; margin-left: 4px; margin-right: 11px; flex: none; }
.panel-title { font-size: 10px; color: #777; }
.comments .panel-title { margin-left: 24px; }
.panel-btn { margin-left: auto; width: 9px; height: 9px; border-radius: 50%; background: #333; color: #eee; font-size: 9px; font-weight: bold; line-height: 9px; text-align: center; }
.panel-grip { width: 3px; height: 11px; border-left: 1px solid #999; margin-left: 7px; margin-right: 1px; }
.tree-wrap { flex: 1; min-height: 0; display: flex; padding-top: 3px; }
.scroll { width: 5px; height: 473px; margin-left: 4px; background: #d4d4d4; position: relative; flex: none; }
.thumb { position: absolute; left: 0; top: 202px; width: 5px; height: 224px; background: #a3a3a3; border-radius: 2px; }
.tree { flex: 1; }
.row { height: 22.500px; display: flex; align-items: center; position: relative; }
.row.l0 { padding-left: 24px; }
.row.l1 { padding-left: 41px; }
.row.noarrow { padding-left: 58px; }
.arrow { width: 10px; height: 14px; margin-right: 7px; flex: none; position: relative; }
.arrow::before { content: ""; position: absolute; inset: 0; background: #555; clip-path: polygon(0 0, 100% 50%, 0 100%); }
.arrow::after { content: ""; position: absolute; inset: 2px 3px 2px 1.500px; background: #eee; clip-path: polygon(0 0, 100% 50%, 0 100%); }
.arrow.open::before { background: #555; clip-path: polygon(100% 15%, 100% 90%, 0 90%); }
.arrow.open::after { inset: 0; background: linear-gradient(#aaa, #777); clip-path: polygon(92% 25%, 92% 84%, 10% 84%); }
.chip { height: 19px; background: #cfcfcf; display: flex; align-items: center; padding-right: 9px; font-size: 10px; color: #5f5f5f; white-space: nowrap; }
.bulb { width: 12px; height: 16px; margin-left: 5px; flex: none; }
.nicon { width: 16px; height: 16px; margin-left: 9px; flex: none; }
.nlabel { margin-left: 13px; }
.chip.feature { padding-left: 2px; }
.ficon { width: 18px; height: 16px; flex: none; }
.chip.feature .nlabel { margin-left: 11px; }

/* angle input */
.angle-box { position: absolute; left: 558px; top: 333px; width: 105px; height: 21px; background: #d4d4d4; display: flex; align-items: center; padding-left: 7px; }
.angle-icon { width: 14px; height: 12px; }
.angle-input { margin-left: 5px; width: 66px; height: 18px; background: #fff; border: 1px solid #2a78d6; padding-left: 15px; display: flex; align-items: center; }
.sel { background: #2a6fd0; color: #fff; font-size: 10.500px; line-height: 16px; width: 37px; white-space: nowrap; }
.angle-caret { margin-left: 4px; }

/* bottom */
.bottom { position: relative; display: flex; align-items: flex-end; flex: none; height: 22px; }
.comments { width: 281px; }
.nav { height: 22px; background: #d8d8d8; display: flex; align-items: center; padding-left: 3px; }
.nav-a { width: 136px; margin-left: 239px; }
.nav-b { width: 88px; margin-left: 6px; }
.nv { width: 16px; height: 16px; flex: none; }
.nv + .nv { margin-left: 8px; }
.nc { border-left-width: 3px; border-right-width: 3px; margin-left: 2px; }
.nc + .nv { margin-left: 6px; }
.rev { margin-left: auto; margin-right: 33px; align-self: center; font-size: 10px; font-weight: bold; color: #555; }
```
